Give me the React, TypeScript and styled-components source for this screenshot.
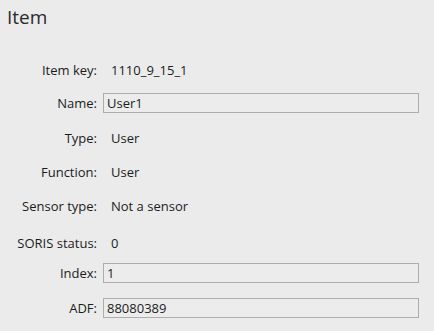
import { createGlobalStyle } from 'styled-components';
import styled from 'styled-components';

const GlobalStyle = createGlobalStyle`
  html, body {
    margin: 0;
    padding: 0;
    background: #ebebeb;
  }
  body {
    font-family: 'Open Sans', 'Noto Sans', sans-serif;
    color: #1c1c1c;
  }
`;

// space = gap above the row, rows aren't perfectly evenly spaced in the dialog
type Field = { label: string; value: string; editable?: boolean; space: number };

const fields: Field[] = [
  { label: 'Item key:', value: '1110_9_15_1', space: 0 },
  { label: 'Name:', value: 'User1', editable: true, space: 13 },
  { label: 'Type:', value: 'User', space: 15 },
  { label: 'Function:', value: 'User', space: 14 },
  { label: 'Sensor type:', value: 'Not a sensor', space: 14 },
  { label: 'SORIS status:', value: '0', space: 17 },
  { label: 'Index:', value: '1', editable: true, space: 10 },
  { label: 'ADF:', value: '88080389', editable: true, space: 15 }
];

export default function App() {
  return (
    <>
      <GlobalStyle />
      <Panel>
        <Title>Item</Title>
        <FieldList>
          {fields.map((f) => (
            <Row key={f.label} $space={f.space}>
              <Label>{f.label}</Label>
              {f.editable ? <Box>{f.value}</Box> : <Value>{f.value}</Value>}
            </Row>
          ))}
        </FieldList>
      </Panel>
    </>
  );
}

const Panel = styled.div`
  width: 434px;
  height: 331px;
  box-sizing: border-box;
  padding: 3px 15px 0 0;
  display: flex;
  flex-direction: column;
`;

const Title = styled.div`
  font-size: 19px;
  line-height: 28px;
  padding-left: 7px;
  color: #2a2a2a;
`;

const FieldList = styled.div`
  display: flex;
  flex-direction: column;
  margin-top: 29px;
`;

const Row = styled.div<{ $space: number }>`
  display: grid;
  grid-template-columns: 97px 1fr;
  column-gap: 6px;
  height: 20px;
  margin-top: ${(p) => p.$space}px;
  align-items: center;
`;

const Label = styled.div`
  font-size: 13px;
  text-align: right;
  white-space: nowrap;
`;

const Value = styled.div`
  font-size: 13px;
  padding-left: 8px;
`;

const Box = styled.div`
  height: 20px;
  box-sizing: border-box;
  border: 1px solid #adadad;
  background: #ececec;
  font-size: 13px;
  line-height: 18px;
  padding-left: 3px;
`;
